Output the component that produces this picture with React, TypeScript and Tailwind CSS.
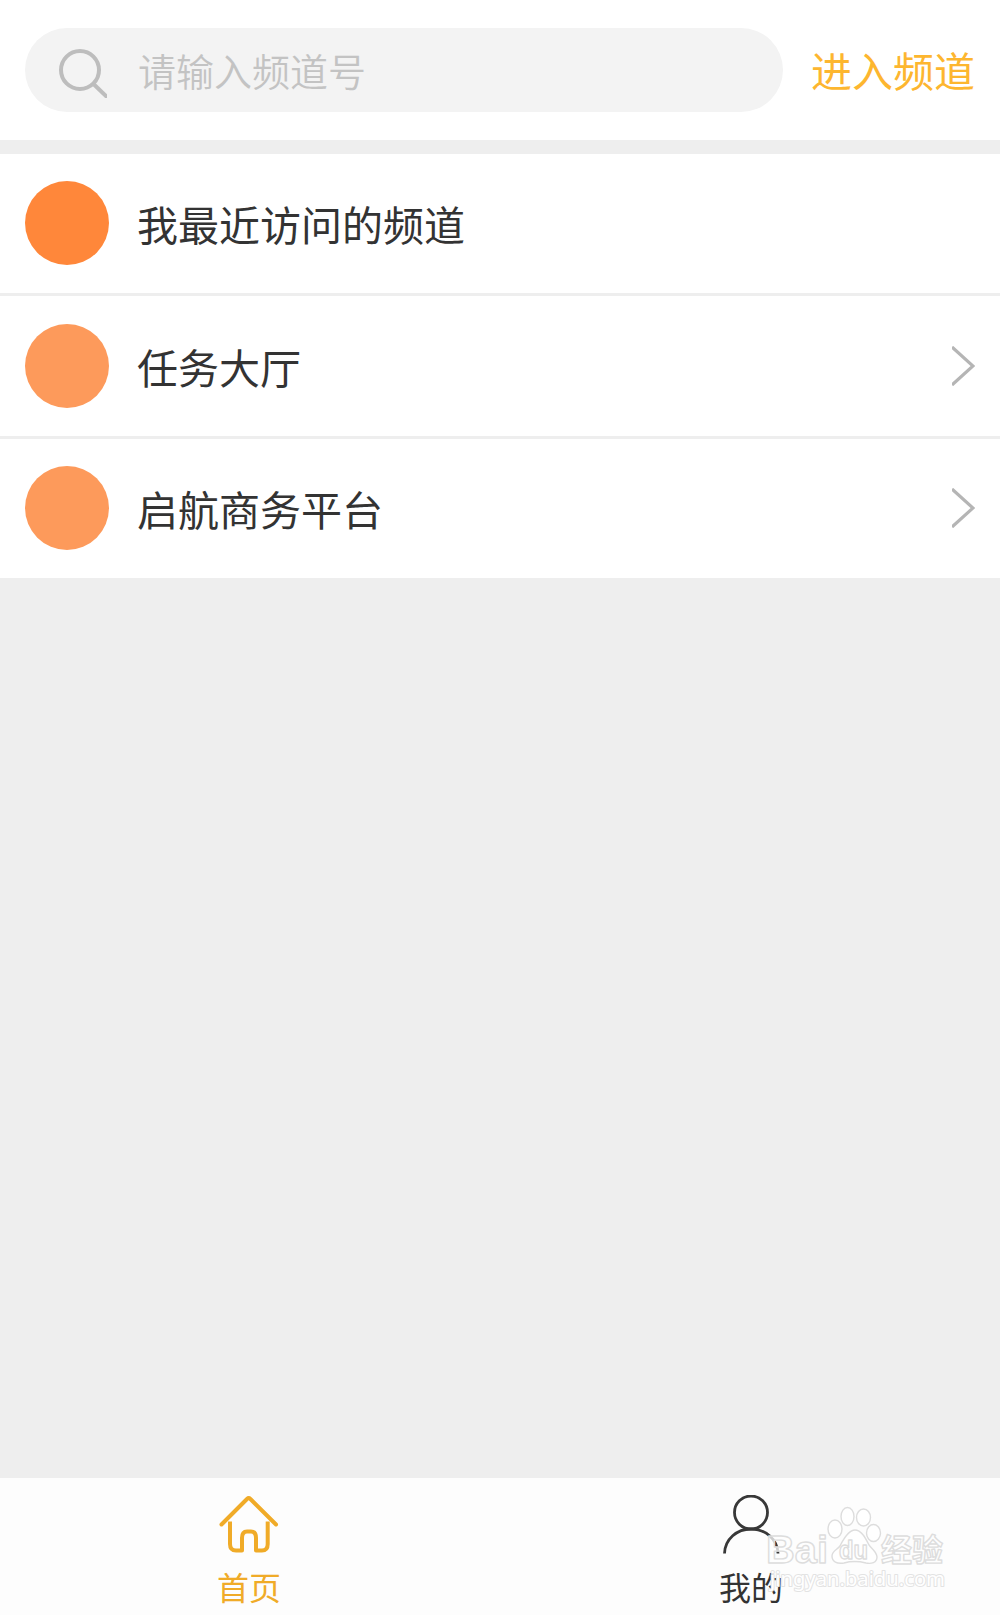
const rows = [
  { label: '我最近访问的频道', dot: 'bg-[#ff873a]', link: false },
  { label: '任务大厅', dot: 'bg-[#fd9a5b]', link: true },
  { label: '启航商务平台', dot: 'bg-[#fd9a5b]', link: true },
];

function SearchIcon() {
  return (
    <svg className="mt-[4px] ml-[32px] h-[52px] w-[50px] shrink-0" viewBox="0 0 50 52" fill="none" stroke="#bdbdbd" strokeWidth="4">
      <circle cx="23" cy="24" r="19" />
      <path d="M36 37.500L51 52" />
    </svg>
  );
}

function Chevron() {
  return (
    <svg className="ml-auto h-10 w-[23px]" viewBox="0 0 23 40" fill="none" stroke="#b5b5b5" strokeWidth="3.2">
      <path d="M0 1L21 20L0 39" />
    </svg>
  );
}

function HomeIcon() {
  return (
    <svg className="h-[60px] w-[60px]" viewBox="0 0 60 60" fill="none" stroke="#f0ab28" strokeWidth="4" strokeLinecap="round" strokeLinejoin="round">
      <path d="M2.500 29.500L28 4Q29.700 2.400 31.400 4L57 29.500" />
      <path strokeLinecap="butt" d="M11 26.500V49Q11 55.500 17 55.500H23V43Q23 36.500 28 36.500H32Q37 36.500 37 43V55.500H43Q48.700 55.500 48.700 49V26.500" />
    </svg>
  );
}

function UserIcon() {
  return (
    <svg className="h-[60px] w-[60px]" viewBox="0 0 60 60" fill="none" stroke="#383838" strokeWidth="2.8">
      <circle cx="30" cy="17.500" r="16.500" />
      <path d="M3.500 58.500C4 44 16 34 30 34S56.500 44 57 58.500" />
    </svg>
  );
}

function Watermark() {
  return (
    <svg
      className="absolute top-[24px] left-[764px] h-[90px] w-[186px]"
      viewBox="0 0 186 90"
      fill="#ffffff"
      fillOpacity="0.75"
      stroke="#dddddd"
      strokeWidth="1.4"
      strokeLinejoin="round"
      fontFamily="'Liberation Sans', 'Noto Sans CJK SC', sans-serif"
      fontWeight="700"
    >
      <ellipse cx="71" cy="27" rx="7" ry="9" />
      <ellipse cx="83.500" cy="14.500" rx="6.500" ry="9" />
      <ellipse cx="99.500" cy="15.500" rx="7" ry="8.500" />
      <ellipse cx="109.500" cy="31" rx="7" ry="8.500" />
      <path d="M76 44C80 36 85 28 91 28S101 35 105 43C108 47 113 50 113 55C113 61 107 62 102 61C94 59 87 59 80 61C73 62 68 60 68 54C68 49 73 48 76 44Z" />
      <text x="2" y="60.500" fontSize="39" textLength="62" lengthAdjust="spacingAndGlyphs">Bai</text>
      <text x="75" y="57" fontSize="25" textLength="29" lengthAdjust="spacingAndGlyphs">du</text>
      <text x="117" y="59" fontSize="31" textLength="62">经验</text>
      <text
        x="6"
        y="84"
        fontSize="19.500"
        fontFamily="'Noto Sans', sans-serif"
        fontWeight="400"
        fillOpacity="1"
        stroke="#e3e3e3"
        strokeWidth="2"
        paintOrder="stroke"
        textLength="175"
        lengthAdjust="spacingAndGlyphs"
      >
        jingyan.baidu.com
      </text>
    </svg>
  );
}

export default function App() {
  return (
    <div className="flex h-[1615px] w-[1000px] flex-col overflow-hidden bg-[#eeeeee] font-['Noto_Sans_CJK_SC',sans-serif] text-[#333333]">
      <header className="flex h-[140px] shrink-0 items-center bg-white pl-[25px]">
        <div className="flex h-[84px] w-[758px] items-center rounded-full bg-[#f3f3f3]">
          <SearchIcon />
          <span className="ml-[31px] text-[38px] leading-[56px] font-[350] text-[#c3c3c3]">请输入频道号</span>
        </div>
        <button className="mb-[2px] ml-[28px] text-[41px] leading-[60px] text-[#fdb62f]">进入频道</button>
      </header>

      <main className="mt-[13.5px] flex flex-col gap-[3px]">
        {rows.map((row) => (
          <div key={row.label} className="flex h-[139.5px] items-center bg-white pr-[25px] pl-[25px]">
            <span className={`h-[84px] w-[84px] rounded-full ${row.dot}`} />
            <span className="ml-[28px] text-[41px] leading-[60px]">{row.label}</span>
            {row.link && <Chevron />}
          </div>
        ))}
      </main>

      <nav className="relative mt-auto flex h-[137px] shrink-0 bg-[#fdfdfd]">
        <div className="flex w-[498px] shrink-0 flex-col items-center pt-[17px] text-[#f0ab28]">
          <HomeIcon />
          <span className="mt-[7px] text-[32px] leading-[48px]">首页</span>
        </div>
        <div className="flex w-[506px] shrink-0 flex-col items-center pt-[17px]">
          <UserIcon />
          <span className="mt-[7px] text-[32px] leading-[48px]">我的</span>
        </div>
        <Watermark />
      </nav>
    </div>
  );
}
